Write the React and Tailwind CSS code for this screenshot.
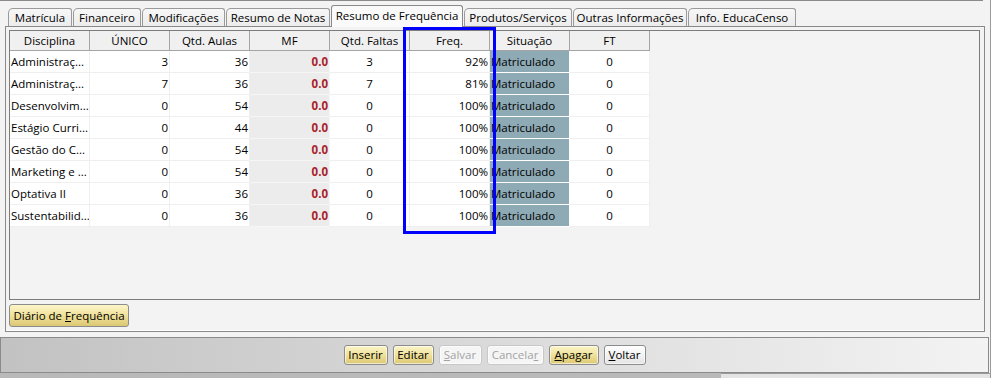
import React from 'react';

const tabs = [
  { label: 'Matrícula', w: 'w-[64px]' },
  { label: 'Financeiro', w: 'w-[68px]' },
  { label: 'Modificações', w: 'w-[83px]' },
  { label: 'Resumo de Notas', w: 'w-[104px]' },
  { label: 'Resumo de Frequência', w: 'w-[132px]', active: true },
  { label: 'Produtos/Serviços', w: 'w-[108px]' },
  { label: 'Outras Informações', w: 'w-[114px]' },
  { label: 'Info. EducaCenso', w: 'w-[108px]' },
];

const columns = ['Disciplina', 'ÚNICO', 'Qtd. Aulas', 'MF', 'Qtd. Faltas', 'Freq.', 'Situação', 'FT'];

const rows = [
  ['Administraç...', 3, 36, 3, '92%'],
  ['Administraç...', 7, 36, 7, '81%'],
  ['Desenvolvim...', 0, 54, 0, '100%'],
  ['Estágio Curri...', 0, 44, 0, '100%'],
  ['Gestão do C...', 0, 54, 0, '100%'],
  ['Marketing e ...', 0, 54, 0, '100%'],
  ['Optativa II', 0, 36, 0, '100%'],
  ['Sustentabilid...', 0, 36, 0, '100%'],
];

function Tab({ label, w, active }) {
  if (active) {
    return (
      <div className={`${w} h-[22px] -mb-px relative z-10 bg-[#fafafa] border border-b-0 border-[#898989] rounded-t-[3px] flex items-center justify-center pb-[2px]`}>
        {label}
      </div>
    );
  }
  return (
    <div className={`${w} h-[18px] bg-gradient-to-b from-[#f7f7f7] to-[#ececec] border border-b-0 border-[#9a9a9a] rounded-tl-[5px] rounded-tr-[3px] flex items-center justify-center`}>
      {label}
    </div>
  );
}

function Btn({ children, kind = 'yellow', w }) {
  const styles = {
    yellow: 'bg-gradient-to-b from-[#fcf5c8] via-[#f0e19a] to-[#dcc873] border-[#8c8c8c] text-black',
    white: 'bg-gradient-to-b from-[#ffffff] to-[#e4e4e4] border-[#8c8c8c] text-black',
    disabled: 'bg-[#f5f5f5] border-[#c8c8c8] text-[#a3a3a3]',
  };
  return (
    <div className={`${w} h-[20px] border rounded-[3px] flex items-center justify-center shadow-[inset_0_0_0_1px_rgba(255,255,255,0.6)] ${styles[kind]}`}>
      {children}
    </div>
  );
}

export default function App() {
  return (
    <div className="relative w-[991px] h-[378px] overflow-hidden bg-[#f3f3f3] border-r border-[#9a9a9a] text-[11.5px] text-black font-['Open_Sans',sans-serif]">
      <div className="h-px w-[983px] bg-[#8a8a8a]" />

      {/* tabs */}
      <div className="mt-[4px] h-[21px] flex items-end pl-[8px] gap-px">
        {tabs.map((t) => (
          <Tab key={t.label} {...t} />
        ))}
      </div>

      {/* tab panel */}
      <div className="ml-[5px] w-[980px] h-[306px] border border-[#898989] shadow-[inset_0_-1px_0_#ffffff] flex flex-col pl-[3px] pt-[3px]">
        <div className="w-[971px] h-[270px] border border-[#7c7c7c] bg-[#f3f3f3] flex flex-col">
          <div className="flex">
            {columns.map((c) => (
              <div key={c} className="w-[80px] h-[20px] bg-[#f0f0f0] border-r border-b border-[#a5a5a5] flex items-center justify-center">
                {c}
              </div>
            ))}
          </div>
          {rows.map((r, i) => (
            <div key={i} className="flex">
              <div className="w-[80px] h-[22px] bg-white border-r border-b border-[#efefef] flex items-center pl-[1px] whitespace-nowrap overflow-hidden">{r[0]}</div>
              <div className="w-[80px] h-[22px] bg-white border-r border-b border-[#efefef] flex items-center justify-end pr-[1px]">{r[1]}</div>
              <div className="w-[80px] h-[22px] bg-white border-r border-b border-[#efefef] flex items-center justify-end pr-[1px]">{r[2]}</div>
              <div className="w-[80px] h-[22px] bg-[#ececec] border-r border-b border-[#f6f6f6] flex items-center justify-end pr-[1px] font-bold text-[#a8232d]">0.0</div>
              <div className="w-[80px] h-[22px] bg-white border-r border-b border-[#efefef] flex items-center justify-center">{r[3]}</div>
              <div className="w-[80px] h-[22px] bg-white border-r border-b border-[#efefef] flex items-center justify-end pr-[1px]">{r[4]}</div>
              <div className="w-[80px] h-[22px] bg-[#8eaab5] border-r border-b border-white flex items-center pl-[1px]">Matriculado</div>
              <div className="w-[80px] h-[22px] bg-white border-r border-b border-[#efefef] flex items-center justify-center">0</div>
            </div>
          ))}
        </div>
        <div className="mt-[4px]">
          <div className="w-[120px] h-[23px] border border-[#8c8c8c] rounded-[3px] bg-gradient-to-b from-[#fcf5c8] via-[#f0e19a] to-[#dcc873] flex items-center justify-center">
            <span>Diário de <span className="underline">F</span>requência</span>
          </div>
        </div>
      </div>

      {/* bottom bar */}
      <div className="mt-[5px] w-[989px] h-[36px] border border-[#8a8a8a] bg-gradient-to-r from-[#c2c2c2] to-[#f3f3f3] flex items-center justify-center gap-[5px]">
        <Btn w="w-[44px]">Inserir</Btn>
        <Btn w="w-[41px]">Editar</Btn>
        <Btn w="w-[43px]" kind="disabled"><span><span className="underline">S</span>alvar</span></Btn>
        <Btn w="w-[57px]" kind="disabled"><span>Cancela<span className="underline">r</span></span></Btn>
        <Btn w="w-[50px]"><span><span className="underline">A</span>pagar</span></Btn>
        <Btn w="w-[42px]" kind="white"><span><span className="underline">V</span>oltar</span></Btn>
      </div>
      <div className="flex h-[6px]">
        <div className="w-[721px] bg-[#b9b9b9]" />
        <div className="flex-1 bg-[#e4e4e4] border-t border-[#9a9a9a]" />
      </div>

      {/* highlight annotation */}
      <div className="absolute left-[403px] top-[27px] w-[93px] h-[207px] border-[3px] border-[#0000ff]" />
    </div>
  );
}
